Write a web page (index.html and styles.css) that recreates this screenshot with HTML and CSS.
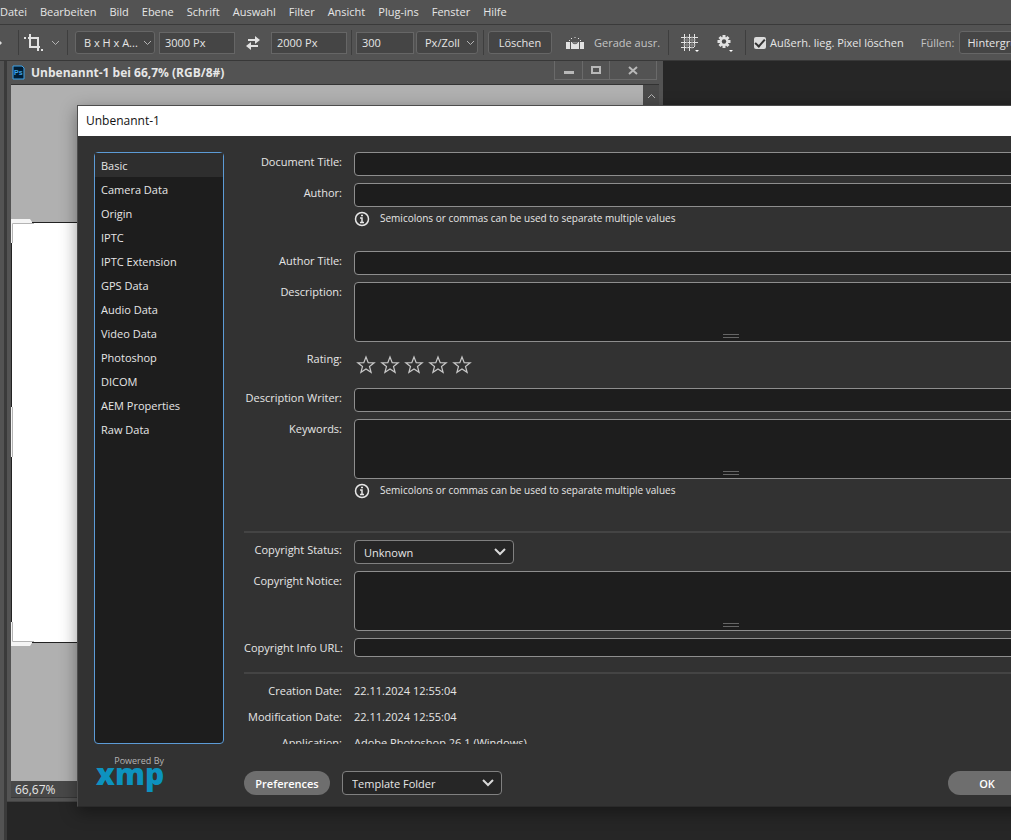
FILE: index.html
```
<!DOCTYPE html>
<html lang="de">
<head>
    <meta charset="UTF-8">
    <meta name="viewport" content="width=device-width, initial-scale=1.0">
    <title>Unbenannt-1</title>
    <link rel="stylesheet" href="styles.css">
</head>
<body>
    <nav class="menubar">
        <a href="#">Datei</a>
        <a href="#">Bearbeiten</a>
        <a href="#">Bild</a>
        <a href="#">Ebene</a>
        <a href="#">Schrift</a>
        <a href="#">Auswahl</a>
        <a href="#">Filter</a>
        <a href="#">Ansicht</a>
        <a href="#">Plug-ins</a>
        <a href="#">Fenster</a>
        <a href="#">Hilfe</a>
    </nav>

    <div class="options">
        <div class="group group-home">
            <svg width="2" height="4" viewBox="0 0 2 4"><path d="M0 0l2 2-2 2z" fill="#ddd"/></svg>
        </div>
        <div class="group group-tool">
            <svg width="20" height="18" viewBox="0 0 20 18" fill="none" stroke="#e2e2e2" stroke-width="2"><path d="M0 4h2M4 4h10v9M6 0v13h10M14 13v4"/><path d="M17 15h2v2h-2z" fill="#e2e2e2" stroke="none"/></svg>
            <svg class="chevron" width="9" height="6" viewBox="0 0 9 6"><path d="M1 1l3.500 3.500L8 1"/></svg>
        </div>
        <div class="group">
            <div class="select tool-select ratio">
                <select aria-label="Format"><option>B x H x A...</option></select>
                <svg class="chevron" width="9" height="6" viewBox="0 0 9 6"><path d="M1 1l3.500 3.500L8 1"/></svg>
            </div>
            <input class="tool-input" type="text" aria-label="Breite" value="3000 Px">
            <button class="icon-btn swap" type="button" aria-label="Tauschen">
                <svg width="14" height="14" viewBox="0 0 14 14" fill="#e2e2e2"><path d="M2 3h7V0l5 4-5 4V5H2zM12 9H5V6L0 10l5 4v-3h7z"/></svg>
            </button>
            <input class="tool-input" type="text" aria-label="Höhe" value="2000 Px">
        </div>
        <div class="group group-res">
            <input class="tool-input short" type="text" aria-label="Auflösung" value="300">
            <div class="select tool-select unit">
                <select aria-label="Einheit"><option>Px/Zoll</option></select>
                <svg class="chevron" width="9" height="6" viewBox="0 0 9 6"><path d="M1 1l3.500 3.500L8 1"/></svg>
            </div>
        </div>
        <div class="group group-clear">
            <button class="tool-btn" type="button">Löschen</button>
            <button class="icon-btn straighten" type="button">
                <svg width="18" height="14" viewBox="0 0 18 14"><path d="M0 6h4v7H0zM14 6h4v7h-4zM5 6h1c1 3 5 3 6 0h1v7H5z" fill="#e2e2e2"/><path d="M6.500 6h5c-.5 2-4.500 2-5 0z" fill="#8a8a8a"/><path d="M3 4h1v1H3zM5 2h1v1H5zM8.500 1h1v1h-1zM12 2h1v1h-1zM14 4h1v1h-1z" fill="#e2e2e2"/></svg>
                <span>Gerade ausr.</span>
            </button>
        </div>
        <div class="group group-icons">
            <button class="icon-btn" type="button" aria-label="Raster">
                <svg width="18" height="18" viewBox="0 0 18 18"><path d="M0 3.500h17M0 8.500h17M0 13.500h13M3.500 0v17M8.500 0v17M13.500 0v13" fill="none" stroke="#e2e2e2"/><path d="M2 6h13M2 11h13M6 2v13M11 2v13" fill="none" stroke="#8c8c8c"/><path d="M14 16h4l-2 2z" fill="#fff"/></svg>
            </button>
            <button class="icon-btn" type="button" aria-label="Optionen">
                <svg width="18" height="18" viewBox="0 0 18 18"><g stroke="#e2e2e2" stroke-width="3"><path d="M7 1v13M.5 7.500h13M2.500 3l9 9M11.500 3l-9 9"/></g><circle cx="7" cy="7.500" r="4.500" fill="#e2e2e2"/><circle cx="7" cy="7.500" r="2.200" fill="#4a4a4a"/><path d="M12 16h4l-2 2z" fill="#fff"/></svg>
            </button>
        </div>
        <div class="group group-last">
            <label class="check"><input type="checkbox" checked>Außerh. lieg. Pixel löschen</label>
            <label class="fill-label" for="fill">Füllen:</label>
            <div class="select tool-select fill">
                <select id="fill"><option>Hintergrund</option></select>
            </div>
        </div>
    </div>

    <main class="workspace">
        <aside class="rail"></aside>

        <section class="doc">
            <header class="doc-title">
                <svg width="13" height="15" viewBox="0 0 13 15"><path d="M1 1h9l2 2v11H1z" fill="#001d34" stroke="#3fa4ea"/><text x="2" y="10" class="ps">Ps</text></svg>
                <h1>Unbenannt-1 bei 66,7% (RGB/8#)</h1>
                <div class="doc-controls">
                    <button type="button" aria-label="Minimieren"><svg width="10" height="10" viewBox="0 0 10 10"><path d="M0 6h10v3H0z" fill="#b8b8b8"/></svg></button>
                    <button type="button" aria-label="Maximieren"><svg width="10" height="8" viewBox="0 0 10 8"><path d="M1 1h8v6H1z" fill="none" stroke="#b8b8b8" stroke-width="2"/></svg></button>
                    <button type="button" aria-label="Schließen"><svg width="10" height="9" viewBox="0 0 10 9"><path d="M1 1l8 7M9 1L1 8" fill="none" stroke="#b8b8b8" stroke-width="2"/></svg></button>
                </div>
            </header>
            <div class="doc-body">
                <div class="canvas">
                    <div class="artboard"></div>
                    <svg class="crop-frame" width="67" height="427" viewBox="0 0 67 427"><path d="M0 0h19l2 3v1H1v20H0zM0 427h19l2-3v-1H1v-20H0zM0 188h1v50H0z" fill="#f4f4f4"/><path d="M1.500 24V4.500H23M1.500 403v19.500H23M1.500 188v50" fill="none" stroke="#b4b4b4"/></svg>
                </div>
                <div class="scrollbar">
                    <svg class="chevron" width="9" height="6" viewBox="0 0 9 6"><path d="M1 5l3.500-3.500L8 5"/></svg>
                </div>
            </div>
            <footer class="doc-status">66,67%</footer>
        </section>

        <section class="dialog">
            <header class="dialog-title">Unbenannt-1</header>
            <div class="dialog-body">
                <ul class="tabs">
                    <li><a class="active" href="#">Basic</a></li>
                    <li><a href="#">Camera Data</a></li>
                    <li><a href="#">Origin</a></li>
                    <li><a href="#">IPTC</a></li>
                    <li><a href="#">IPTC Extension</a></li>
                    <li><a href="#">GPS Data</a></li>
                    <li><a href="#">Audio Data</a></li>
                    <li><a href="#">Video Data</a></li>
                    <li><a href="#">Photoshop</a></li>
                    <li><a href="#">DICOM</a></li>
                    <li><a href="#">AEM Properties</a></li>
                    <li><a href="#">Raw Data</a></li>
                </ul>

                <form class="form">
                    <label for="docTitle">Document Title:</label>
                    <input class="field" type="text" id="docTitle">

                    <label for="author">Author:</label>
                    <div>
                        <input class="field" type="text" id="author">
                        <p class="hint">
                            <svg width="16" height="16" viewBox="0 0 16 16"><circle cx="8" cy="8" r="6.500"/><path d="M6 7h2v4M6 11.500h4M7 4.500h2"/></svg>
                            Semicolons or commas can be used to separate multiple values
                        </p>
                    </div>

                    <label for="authorTitle">Author Title:</label>
                    <input class="field" type="text" id="authorTitle">

                    <label for="description">Description:</label>
                    <div class="area"><textarea class="field" id="description"></textarea><span class="grip"></span></div>

                    <span class="label">Rating:</span>
                    <div class="stars">
                        <button type="button" aria-label="1"><svg width="20" height="20" viewBox="0 0 20 20"><path d="M10 2l2.200 5.600 6 .2-4.700 3.700 1.600 5.800L10 14l-5.100 3.300 1.600-5.800L1.800 7.800l6-.2z"/></svg></button>
                        <button type="button" aria-label="2"><svg width="20" height="20" viewBox="0 0 20 20"><path d="M10 2l2.200 5.600 6 .2-4.700 3.700 1.600 5.800L10 14l-5.100 3.300 1.600-5.800L1.800 7.800l6-.2z"/></svg></button>
                        <button type="button" aria-label="3"><svg width="20" height="20" viewBox="0 0 20 20"><path d="M10 2l2.200 5.600 6 .2-4.700 3.700 1.600 5.800L10 14l-5.100 3.300 1.600-5.800L1.800 7.800l6-.2z"/></svg></button>
                        <button type="button" aria-label="4"><svg width="20" height="20" viewBox="0 0 20 20"><path d="M10 2l2.200 5.600 6 .2-4.700 3.700 1.600 5.800L10 14l-5.100 3.300 1.600-5.800L1.800 7.800l6-.2z"/></svg></button>
                        <button type="button" aria-label="5"><svg width="20" height="20" viewBox="0 0 20 20"><path d="M10 2l2.200 5.600 6 .2-4.700 3.700 1.600 5.800L10 14l-5.100 3.300 1.600-5.800L1.800 7.800l6-.2z"/></svg></button>
                    </div>

                    <label for="writer">Description Writer:</label>
                    <input class="field" type="text" id="writer">

                    <label for="keywords">Keywords:</label>
                    <div>
                        <div class="area"><textarea class="field" id="keywords"></textarea><span class="grip"></span></div>
                        <p class="hint">
                            <svg width="16" height="16" viewBox="0 0 16 16"><circle cx="8" cy="8" r="6.500"/><path d="M6 7h2v4M6 11.500h4M7 4.500h2"/></svg>
                            Semicolons or commas can be used to separate multiple values
                        </p>
                    </div>

                    <hr>

                    <label for="status">Copyright Status:</label>
                    <div class="select">
                        <select id="status"><option>Unknown</option></select>
                        <svg class="arrow" width="12" height="8" viewBox="0 0 12 8"><path d="M1 1l5 5 5-5"/></svg>
                    </div>

                    <label for="notice">Copyright Notice:</label>
                    <div class="area"><textarea class="field" id="notice"></textarea><span class="grip"></span></div>

                    <label class="low" for="infoUrl">Copyright Info URL:</label>
                    <input class="field low" type="text" id="infoUrl">

                    <hr>

                    <span class="label low">Creation Date:</span>
                    <span class="low">22.11.2024 12:55:04</span>
                    <span class="label low">Modification Date:</span>
                    <span class="low">22.11.2024 12:55:04</span>
                    <span class="label low">Application:</span>
                    <span class="low">Adobe Photoshop 26.1 (Windows)</span>
                </form>

                <div class="powered">
                    <span>Powered By</span>
                    <strong>xmp</strong>
                </div>

                <div class="actions">
                    <button class="pill" type="button">Preferences</button>
                    <div class="select">
                        <select aria-label="Template Folder"><option>Template Folder</option></select>
                        <svg class="arrow" width="12" height="8" viewBox="0 0 12 8"><path d="M1 1l5 5 5-5"/></svg>
                    </div>
                    <button class="pill ok" type="button">OK</button>
                </div>
            </div>
        </section>
    </main>
</body>
</html>
```
FILE: styles.css
```
* {
    margin: 0;
    padding: 0;
    box-sizing: border-box;
}

body {
    font-family: 'Open Sans', 'Noto Sans', sans-serif;
    font-size: 11px;
    color: #e6e6e6;
    background: #262626;
    height: 100vh;
    display: flex;
    flex-direction: column;
    overflow: hidden;
}

a {
    color: inherit;
    text-decoration: none;
}

button, input, select, textarea {
    font: inherit;
    color: inherit;
}

button {
    border: none;
    background: none;
}

svg {
    display: block;
    flex: none;
}

.chevron {
    fill: none;
    stroke: #b4b4b4;
}

/* menu */

.menubar {
    display: flex;
    gap: 13px;
    height: 25px;
    line-height: 24px;
    background: #535353;
    border-bottom: 1px solid #3a3a3a;
}

/* options bar */

.options {
    display: flex;
    align-items: center;
    height: 36px;
    background: #535353;
    border-bottom: 1px solid #383838;
    white-space: nowrap;
}

.group {
    display: flex;
    align-items: center;
    flex: none;
    height: 25px;
    gap: 4px;
    padding: 0 4px 0 7px;
    border-left: 1px solid #3e3e3e;
}

.group-home {
    width: 18px;
    padding: 0;
    border: none;
}

.group-tool {
    width: 49px;
    gap: 7px;
    padding-left: 5px;
}

.group-res {
    gap: 2px;
    padding: 0 5px 0 4px;
}

.group-clear {
    width: 185px;
    gap: 14px;
    padding-left: 4px;
}

.group-icons {
    width: 77px;
    gap: 18px;
    padding-left: 12px;
}

.group-last {
    padding-left: 8px;
}

.tool-input {
    width: 76px;
    height: 22px;
    padding: 0 5px;
    background: #454545;
    border: 1px solid #666;
}

.tool-input.short {
    width: 58px;
}

.icon-btn {
    display: flex;
    align-items: center;
    gap: 10px;
    color: #c4c4c4;
}

.swap {
    width: 28px;
    justify-content: center;
}

.tool-btn {
    width: 64px;
    height: 23px;
    background: #454545;
    border: 1px solid #666;
    border-radius: 3px;
}

.select {
    position: relative;
    width: 160px;
    height: 24px;
}

.select select {
    appearance: none;
    width: 100%;
    height: 100%;
    padding: 0 9px;
    background: #262626;
    border: 1px solid #808080;
    border-radius: 4px;
}

.select svg {
    position: absolute;
    right: 8px;
    top: 8px;
    pointer-events: none;
}

.arrow {
    fill: none;
    stroke: #d8d8d8;
    stroke-width: 2;
}

.tool-select {
    height: 23px;
}

.tool-select select {
    padding: 0 8px;
    background: #454545;
    border-color: #666;
    border-radius: 3px;
}

.tool-select svg {
    top: 9px;
    right: 3px;
}

.ratio {
    width: 80px;
}

.unit {
    width: 62px;
}

.fill {
    width: 120px;
}

.check {
    display: flex;
    align-items: center;
    gap: 4px;
}

.check input {
    appearance: none;
    width: 12px;
    height: 12px;
    border-radius: 2px;
    background: #dcdcdc;
    display: grid;
    place-items: center;
}

.check input:checked::before {
    content: "";
    width: 4px;
    height: 8px;
    margin-bottom: 2px;
    border: solid #333;
    border-width: 0 2px 2px 0;
    transform: rotate(42deg);
}

.fill-label {
    margin-left: 13px;
    color: #c4c4c4;
}

/* workspace */

.workspace {
    position: relative;
    flex: 1;
    display: flex;
}

.rail {
    width: 7px;
    background: #535353;
    border-right: 3px solid #3a3a3a;
}

.doc {
    display: flex;
    flex-direction: column;
    width: 656px;
    height: 741px;
    padding: 0 4px 3px;
    background: #535353;
    border-bottom: 1px solid #444;
}

.doc-title {
    display: flex;
    align-items: center;
    gap: 6px;
    height: 23px;
    padding-left: 1px;
}

.doc-title h1 {
    font-size: 12px;
    font-weight: bold;
}

.ps {
    font: bold 7px 'Liberation Sans', sans-serif;
    fill: #3fa4ea;
}

.doc-controls {
    display: flex;
    align-self: flex-start;
    margin-left: auto;
    margin-right: 2px;
    border: 1px solid #6a6a6a;
    border-top: none;
}

.doc-controls button {
    display: grid;
    place-items: center;
    width: 27px;
    height: 18px;
}

.doc-controls button + button {
    border-left: 1px solid #6a6a6a;
}

.doc-controls button:last-child {
    width: 47px;
}

.doc-body {
    flex: 1;
    display: flex;
    border: 1px solid #333;
    border-width: 1px 0 0;
}

.canvas {
    position: relative;
    flex: 1;
    padding-top: 137px;
    background: #b0b0b0;
}

.artboard {
    height: 421px;
    background: #fff;
    border: 1px solid #222;
    border-right: none;
}

.crop-frame {
    position: absolute;
    left: 0;
    top: 134px;
}

.scrollbar {
    width: 16px;
    background: #4a4a4a;
    padding: 8px 4px;
}

.doc-status {
    height: 17px;
    padding-left: 4px;
    font-size: 12px;
    line-height: 17px;
    background: #484848;
    border-bottom: 1px solid #383838;
}

/* metadata dialog, runs past the right edge of the window */

.dialog {
    position: absolute;
    left: 77px;
    right: -113px;
    top: 44px;
    background: #323232;
    border: 1px solid #4c4c4c;
    border-bottom-color: #2a2a2a;
    box-shadow: 0 5px 16px rgba(0, 0, 0, 0.4);
}

.dialog-title {
    height: 30px;
    padding-left: 8px;
    font-size: 12px;
    line-height: 30px;
    color: #111;
    background: #fff;
}

.dialog-body {
    display: grid;
    grid-template-columns: 130px 1fr;
    grid-template-rows: 592px 62px;
    column-gap: 20px;
    padding: 16px 16px 0;
}

.tabs {
    list-style: none;
    background: #1d1d1d;
    border: 1px solid #5c9bd6;
    border-radius: 4px;
}

.tabs a {
    display: block;
    height: 24px;
    padding-left: 6px;
    line-height: 26px;
}

.tabs .active {
    background: #2e2e2e;
}

.form {
    display: grid;
    grid-template-columns: 98px 1fr;
    gap: 7px 12px;
    align-content: start;
    overflow: hidden;
}

.form label,
.form .label {
    line-height: 20px;
    text-align: right;
    white-space: nowrap;
}

.form .low {
    line-height: 19px;
}

.field {
    display: block;
    width: 100%;
    height: 24px;
    padding: 0 8px;
    background: #1d1d1d;
    border: 1px solid #8e8e8e;
    border-radius: 4px;
}

.field.low {
    height: 19px;
}

.area {
    position: relative;
}

.area .field {
    height: 60px;
    resize: none;
}

.grip {
    position: absolute;
    left: 50%;
    bottom: 4px;
    width: 16px;
    height: 4px;
    margin-left: -8px;
    border: solid #666;
    border-width: 1px 0;
}

.hint {
    display: flex;
    gap: 10px;
    height: 37px;
    padding-top: 4px;
    font-size: 10px;
    line-height: 15px;
}

.hint svg {
    fill: none;
    stroke: #e6e6e6;
    stroke-width: 1.5;
}

.stars {
    display: flex;
    gap: 4px;
    height: 32px;
    padding: 6px 2px;
}

.stars svg {
    fill: none;
    stroke: #c8c8c8;
    stroke-width: 1.2;
}

hr {
    grid-column: 1 / -1;
    height: 2px;
    margin-top: 8px;
    border: none;
    background: #444;
}

.powered {
    display: flex;
    flex-direction: column;
    width: 70px;
    padding: 10px 0 0 2px;
}

.powered span {
    font-size: 9px;
    line-height: 14px;
    text-align: right;
    color: #b4b4b4;
}

.powered strong {
    font-size: 30px;
    font-weight: 800;
    line-height: 12px;
    color: #0d92bf;
}

.actions {
    display: flex;
    align-items: flex-start;
    gap: 12px;
    padding-top: 27px;
}

.pill {
    width: 86px;
    height: 24px;
    border-radius: 12px;
    font-weight: 600;
    color: #fff;
    background: #6e6e6e;
}

.pill.ok {
    width: 78px;
    margin-left: auto;
    margin-right: 81px;
}
```
